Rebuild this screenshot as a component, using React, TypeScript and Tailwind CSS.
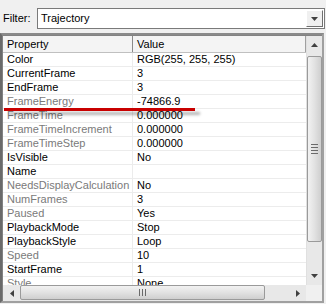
import React from "react";

const rows: { name: string; value: string; ro?: boolean }[] = [
  { name: "Color", value: "RGB(255, 255, 255)" },
  { name: "CurrentFrame", value: "3" },
  { name: "EndFrame", value: "3" },
  { name: "FrameEnergy", value: "-74866.9", ro: true },
  { name: "FrameTime", value: "0.000000", ro: true },
  { name: "FrameTimeIncrement", value: "0.000000", ro: true },
  { name: "FrameTimeStep", value: "0.000000", ro: true },
  { name: "IsVisible", value: "No" },
  { name: "Name", value: "" },
  { name: "NeedsDisplayCalculation", value: "No", ro: true },
  { name: "NumFrames", value: "3", ro: true },
  { name: "Paused", value: "Yes", ro: true },
  { name: "PlaybackMode", value: "Stop" },
  { name: "PlaybackStyle", value: "Loop" },
  { name: "Speed", value: "10", ro: true },
  { name: "StartFrame", value: "1" },
  { name: "Style", value: "None", ro: true },
];

function Tri({ dir }: { dir: "up" | "down" | "left" | "right" }) {
  const pts =
    dir === "down"
      ? "0,0 7,0 3.5,4"
      : dir === "up"
      ? "0,4 7,4 3.5,0"
      : dir === "left"
      ? "4,0 4,7 0,3.5"
      : "0,0 0,7 4,3.5";
  const w = dir === "up" || dir === "down" ? 7 : 4;
  const h = dir === "up" || dir === "down" ? 4 : 7;
  return (
    <svg width={w} height={h} viewBox={`0 0 ${w} ${h}`}>
      <polygon points={pts} fill="#404040" />
    </svg>
  );
}

export default function App() {
  return (
    <div
      className="w-[326px] h-[304px] bg-[#f0f0f0] relative overflow-hidden text-[11px] text-black"
      style={{ fontFamily: '"Liberation Sans", Arial, sans-serif' }}
    >
      {/* Filter row */}
      <div className="flex items-center h-[21px] mt-[8px]">
        <span className="ml-[3px] w-[34px]">Filter:</span>
        <div className="flex-1 h-[21px] mr-[1px] bg-white border border-[#7a7a7a] flex items-center">
          <span className="ml-[3px] flex-1">Trajectory</span>
          <div className="w-[17px] h-[17px] mr-[1px] bg-[#f0f0f0] border border-[#fff] border-r-[#707070] border-b-[#707070] flex items-center justify-center">
            <Tri dir="down" />
          </div>
        </div>
      </div>

      {/* Grid */}
      <div className="mt-[4px] w-[324px] h-[270px] border-2 border-[#a0a0a0] border-t-[#8a8a8a] border-l-[#6a6a6a] flex flex-col bg-white">
        <div className="flex flex-1 min-h-0 border border-[#828282] border-r-0 border-b-0">
          {/* content */}
          <div className="flex-1 flex flex-col min-w-0 overflow-hidden">
            <div className="flex h-[17px] shrink-0 bg-[#f4f4f4] border-b border-[#c0c0c0]">
              <div className="w-[130px] pl-[4px] flex items-center border-r border-[#8a8a8a]">Property</div>
              <div className="flex-1 pl-[4px] flex items-center border-r border-[#a0a0a0]">Value</div>
            </div>
            {rows.map((r) => (
              <div key={r.name} className="flex h-[14px] shrink-0 border-b border-[#ececec] leading-[13px]">
                <div className={`w-[130px] pl-[4px] border-r border-[#ececec] whitespace-nowrap ${r.ro ? "text-[#7a7a7a]" : "text-black"}`}>
                  {r.name}
                </div>
                <div className="flex-1 pl-[4px] whitespace-nowrap">{r.value}</div>
              </div>
            ))}
          </div>
          {/* vertical scrollbar */}
          <div className="w-[16px] shrink-0 bg-[#e8e8e8] border-l border-[#e0e0e0] flex flex-col items-center">
            <div className="h-[18px] w-full flex items-center justify-center">
              <Tri dir="up" />
            </div>
            <div className="mt-[2px] w-[15px] h-[186px] rounded-[2px] border border-[#9a9a9a] bg-gradient-to-r from-[#f2f2f2] via-[#e2e2e2] to-[#cfcfcf] flex flex-col items-center justify-center gap-[2px]">
              <div className="w-[7px] h-[1px] bg-[#6a6a6a]" />
              <div className="w-[7px] h-[1px] bg-[#6a6a6a]" />
              <div className="w-[7px] h-[1px] bg-[#6a6a6a]" />
              <div className="w-[7px] h-[1px] bg-[#6a6a6a]" />
            </div>
            <div className="flex-1" />
            <div className="h-[18px] w-full flex items-center justify-center">
              <Tri dir="down" />
            </div>
          </div>
        </div>
        {/* horizontal scrollbar */}
        <div className="h-[16px] shrink-0 flex bg-[#e8e8e8] border-l border-[#828282]">
          <div className="w-[17px] flex items-center justify-center">
            <Tri dir="left" />
          </div>
          <div className="w-[245px] h-[15px] mt-[0px] rounded-[2px] border border-[#9a9a9a] bg-gradient-to-b from-[#f2f2f2] via-[#e2e2e2] to-[#cfcfcf] flex items-center justify-center gap-[2px]">
            <div className="w-[1px] h-[7px] bg-[#6a6a6a]" />
            <div className="w-[1px] h-[7px] bg-[#6a6a6a]" />
            <div className="w-[1px] h-[7px] bg-[#6a6a6a]" />
          </div>
          <div className="flex-1 flex items-center justify-end pr-[6px]">
            <Tri dir="right" />
          </div>
          <div className="w-[16px] bg-[#f0f0f0]" />
        </div>
      </div>

      {/* red annotation line */}
      <div className="absolute left-[4px] top-[108px] w-[191px] h-[3px] bg-[#c80000] shadow-[5px_4px_3px_rgba(0,0,0,0.3)]" />
    </div>
  );
}
